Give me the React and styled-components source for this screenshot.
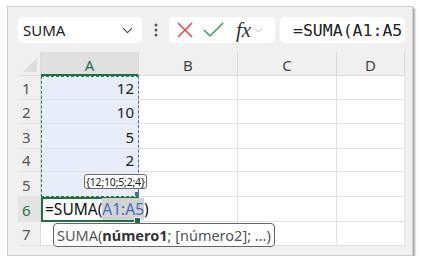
import React from 'react';
import styled, { createGlobalStyle } from 'styled-components';
import { ChevronDown } from 'lucide-react';

const GlobalStyle = createGlobalStyle`
  body {
    margin: 0;
    background: #ffffff;
    font-family: 'Noto Sans', 'Liberation Sans', sans-serif;
  }
`;

const columns = ['A', 'B', 'C', 'D'];
// A5 holds 4, but the value tooltip covers it
const values = ['12', '10', '5', '2', '', '', ''];

const App = () => {
  return (
    <>
      <GlobalStyle />
      <Frame>
        <Toolbar>
          <NameBox>
            <span>SUMA</span>
            <ChevronDown size={17} strokeWidth={1.5} color="#444" />
          </NameBox>
          <Dots>
            <svg width="4" height="14" viewBox="0 0 4 14">
              <circle cx="2" cy="2" r="1.5" fill="#555" />
              <circle cx="2" cy="7" r="1.5" fill="#555" />
              <circle cx="2" cy="12" r="1.5" fill="#555" />
            </svg>
          </Dots>
          <FxBox>
            <svg width="16" height="16" viewBox="0 0 16 16">
              <path d="M1 1 L15 15 M15 1 L1 15" stroke="#e5463d" strokeWidth="1.5" fill="none" />
            </svg>
            <svg width="21" height="16" viewBox="0 0 21 16">
              <path d="M1 8 L7 14 L20 1" stroke="#3a9f57" strokeWidth="1.5" fill="none" />
            </svg>
            <FxLabel>fx</FxLabel>
            <ChevronDown size={13} strokeWidth={1.4} color="#a0a0a0" />
          </FxBox>
          <FormulaBox>=SUMA(A1:A5)</FormulaBox>
        </Toolbar>

        <Sheet>
          <Corner>
            <CornerMark />
          </Corner>
          {columns.map((c, i) => (
            <ColHead key={c} $active={i === 0}>{c}</ColHead>
          ))}

          {values.map((v, r) => (
            <React.Fragment key={r}>
              <RowHead $active={r === 5}>{r + 1}</RowHead>
              {columns.map((c, i) => {
                if (i === 0 && r === 5) {
                  return (
                    <ActiveCell key={c}>
                      <FormulaText>
                        =SUMA(<RefText>A1:A5</RefText>)
                      </FormulaText>
                      <FillHandle />
                    </ActiveCell>
                  );
                }
                return (
                  <Cell key={c} $selected={i === 0 && r < 5}>
                    {i === 0 ? v : ''}
                  </Cell>
                );
              })}
            </React.Fragment>
          ))}

          <Marquee />
          <RefHandle />
          <ValueTip>{'{12;10;5;2;4}'}</ValueTip>
          <ArgTip>
            SUMA(<b>número1</b>; [número2]; ...)
          </ArgTip>
        </Sheet>
      </Frame>
    </>
  );
};

export default App;

const Frame = styled.div`
  margin: 6px 0 0 7px;
  width: 406px;
  height: 250px;
  box-sizing: border-box;
  border: 1px solid #cdcdcd;
  box-shadow: 2px 2px 2px rgba(0, 0, 0, 0.35);
  background: #f0f0f0;
  padding: 10px 7px 0 10px;
  display: flex;
  flex-direction: column;
  overflow: hidden;
`;

const Toolbar = styled.div`
  display: flex;
  align-items: center;
  height: 26px;
`;

const NameBox = styled.div`
  width: 124px;
  height: 26px;
  box-sizing: border-box;
  background: #fff;
  border-radius: 5px;
  padding: 0 6px 0 5px;
  display: flex;
  align-items: center;
  justify-content: space-between;
  font-size: 15px;
  color: #222;
`;

const Dots = styled.div`
  width: 27px;
  display: flex;
  justify-content: center;
`;

const FxBox = styled.div`
  width: 106px;
  height: 26px;
  box-sizing: border-box;
  background: #fff;
  border-radius: 5px;
  padding: 0 4px 0 8px;
  display: flex;
  align-items: center;
  gap: 10px;
`;

const FxLabel = styled.span`
  font-family: 'Liberation Serif', 'DejaVu Serif', serif;
  font-style: italic;
  font-size: 21px;
  color: #333;
  margin-left: 2px;
  margin-right: -9px;
  line-height: 1;
`;

const FormulaBox = styled.div`
  flex: 1;
  height: 26px;
  margin-left: 5px;
  box-sizing: border-box;
  background: #fff;
  border-radius: 5px;
  padding: 0 0 0 13px;
  display: flex;
  align-items: center;
  overflow: hidden;
  white-space: nowrap;
  font-family: 'DejaVu Sans Mono', 'Liberation Mono', monospace;
  font-size: 16.5px;
  color: #222;
`;

const Sheet = styled.div`
  position: relative;
  margin-top: 9px;
  display: grid;
  grid-template-columns: 23px 98px 99px 99px 68px;
  grid-template-rows: 24px 24px 24px 25px 23px 25px 25px 24px;
  background: #fff;
  font-size: 15px;
`;

const Corner = styled.div`
  position: relative;
  background: #f0f0f0;
  border-right: 1px solid #dadada;
  border-bottom: 1px solid #dadada;
`;

const CornerMark = styled.div`
  position: absolute;
  right: 3px;
  bottom: 3px;
  width: 0;
  height: 0;
  border-left: 14px solid transparent;
  border-bottom: 14px solid #dcdcdc;
`;

const ColHead = styled.div`
  display: flex;
  align-items: center;
  justify-content: center;
  padding-top: 3px;
  box-sizing: border-box;
  background: ${(p) => (p.$active ? '#e0e0e0' : '#f0f0f0')};
  color: ${(p) => (p.$active ? '#1e7145' : '#444')};
  border-right: 1px solid #dadada;
  border-bottom: ${(p) => (p.$active ? '2px solid #1e7145' : '1px solid #dadada')};
`;

const RowHead = styled.div`
  display: flex;
  align-items: flex-end;
  padding: 0 0 1px 4px;
  box-sizing: border-box;
  background: ${(p) => (p.$active ? '#e4e4e4' : '#f0f0f0')};
  color: ${(p) => (p.$active ? '#1e7145' : '#555')};
  border-right: 1px solid #dadada;
  border-bottom: 1px solid #e2e2e2;
`;

const Cell = styled.div`
  display: flex;
  align-items: flex-end;
  justify-content: flex-end;
  padding: 0 4px 1px 0;
  box-sizing: border-box;
  background: ${(p) => (p.$selected ? '#e8eef9' : '#fff')};
  color: #222;
  border-right: 1px solid #e1e1e1;
  border-bottom: 1px solid #e1e1e1;
`;

const ActiveCell = styled.div`
  position: relative;
  z-index: 2;
  display: flex;
  align-items: flex-end;
  padding: 0 0 1px 2px;
  box-sizing: border-box;
  border: 2px solid #1e7145;
  background: #fff;
`;

const FormulaText = styled.span`
  white-space: nowrap;
  font-size: 15.5px;
  color: #111;
  line-height: 20px;
`;

const RefText = styled.span`
  color: #3c6cc0;
  background: #d3d3d3;
`;

const FillHandle = styled.div`
  position: absolute;
  right: -4px;
  bottom: -4px;
  width: 5px;
  height: 5px;
  background: #1e7145;
  border: 1px solid #fff;
`;

const Marquee = styled.div`
  position: absolute;
  left: 23px;
  top: 24px;
  width: 98px;
  height: 121px;
  box-sizing: border-box;
  border: 1.5px dashed #2c7a4e;
  border-right-color: #3b6fb6;
  pointer-events: none;
`;

const RefHandle = styled.div`
  position: absolute;
  left: 117px;
  top: 140px;
  width: 4px;
  height: 4px;
  background: #3b6fb6;
`;

const ValueTip = styled.div`
  position: absolute;
  left: 66px;
  top: 122px;
  height: 15px;
  box-sizing: border-box;
  padding: 0 1px;
  display: flex;
  align-items: center;
  background: #fff;
  border: 1px solid #6b6b6b;
  border-radius: 3px;
  font-size: 10.5px;
  letter-spacing: -0.2px;
  color: #1a1a1a;
  z-index: 3;
`;

const ArgTip = styled.div`
  position: absolute;
  left: 35px;
  top: 171px;
  width: 222px;
  height: 24px;
  box-sizing: border-box;
  padding: 0 0 0 3px;
  display: flex;
  align-items: center;
  background: #fff;
  border: 1.5px solid #666;
  border-radius: 4px;
  font-size: 14.5px;
  color: #555;
  white-space: nowrap;
  z-index: 3;

  b {
    color: #333;
  }
`;
